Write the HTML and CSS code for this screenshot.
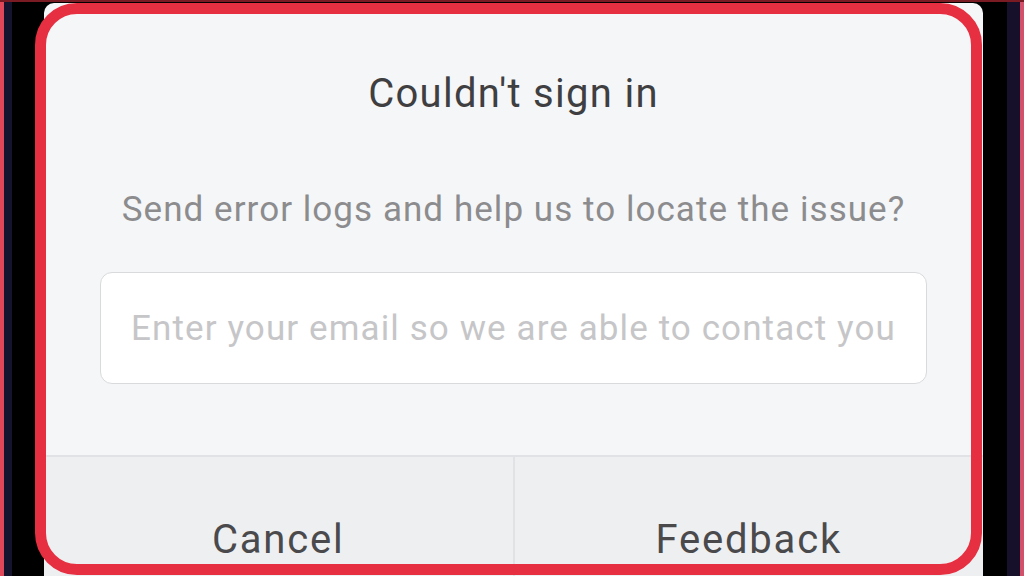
FILE: index.html
```html
<!DOCTYPE html>
<html lang="en">
<head>
    <meta charset="UTF-8">
    <meta name="viewport" content="width=device-width, initial-scale=1.0">
    <title>Couldn't sign in</title>
    <link rel="stylesheet" href="styles.css">
</head>
<body>

    <!-- Phone screen edges -->
    <div class="screen">
        <div class="edge edge-left"></div>

        <!-- Dialog -->
        <div class="dialog">
            <h1 class="dialog-title">Couldn't sign in</h1>
            <p class="dialog-text">Send error logs and help us to locate the issue?</p>
            <div class="email-box">
                <input class="email-input" type="text" placeholder="Enter your email so we are able to contact you">
            </div>
            <div class="dialog-buttons">
                <button class="dialog-btn">Cancel</button>
                <button class="dialog-btn">Feedback</button>
            </div>
        </div>

        <div class="edge edge-right"></div>

        <!-- Red highlight drawn over the dialog -->
        <div class="highlight"></div>
    </div>

</body>
</html>
```

FILE: styles.css
```css
/* Root variables */
:root {
    --frame-red: #e62f40;
    --dialog-bg: #f5f6f8;
    --buttons-bg: #eeeff1;
    --divider: #e1e2e5;
    --title-color: #3f3f41;
    --text-color: #8c8c8e;
    --hint-color: #c6c6c8;
    --font-family: 'Roboto', sans-serif;
}

/* Reset default styles */
* {
    margin: 0;
    padding: 0;
    box-sizing: border-box;
}

body {
    background-color: #000;
    font-family: var(--font-family);
    width: 1024px;
    height: 576px;
    overflow: hidden;
}

/* Whole picture */
.screen {
    position: relative;
    display: flex;
    height: 576px;
    border-top: 2px solid #7a1a22;
}

/* Dark bezel strips on both sides */
.edge {
    width: 44px;
    flex-shrink: 0;
}

.edge-left {
    background: linear-gradient(to right, #e0485a 0 4px, #14142e 4px 12px, #000 12px);
}

.edge-right {
    width: 41px;
    background: linear-gradient(to right, #000 0 24px, #17102a 24px 37px, #d2506a 37px);
}

/* Dialog card */
.dialog {
    flex: 1;
    margin-top: 1px;
    background-color: var(--dialog-bg);
    border-radius: 10px 10px 0 0;
    display: flex;
    flex-direction: column;
    align-items: center;
}

.dialog-title {
    font-size: 40px;
    font-weight: 400;
    line-height: 48px;
    letter-spacing: 1.3px;
    color: var(--title-color);
    margin-top: 67px;
}

.dialog-text {
    font-size: 35px;
    line-height: 40px;
    letter-spacing: 1.05px;
    color: var(--text-color);
    margin-top: 72px;
}

/* Email field */
.email-box {
    width: 827px;
    height: 112px;
    margin-top: 42px;
    background-color: #fff;
    border: 1.5px solid #d9dadc;
    border-radius: 12px;
    display: flex;
    align-items: center;
}

.email-input {
    width: 100%;
    border: none;
    outline: none;
    background: transparent;
    font-family: var(--font-family);
    font-size: 35px;
    letter-spacing: 1.1px;
    text-align: center;
    color: var(--title-color);
}

.email-input::placeholder {
    color: var(--hint-color);
}

/* Bottom buttons */
.dialog-buttons {
    width: 100%;
    margin-top: 71px;
    flex: 1;
    display: flex;
    background-color: var(--buttons-bg);
    border-top: 2px solid var(--divider);
}

.dialog-btn {
    flex: 1;
    border: none;
    background: transparent;
    font-family: var(--font-family);
    font-size: 40px;
    letter-spacing: 1.8px;
    color: #4a4a4c;
    padding-top: 45px;
}

.dialog-btn + .dialog-btn {
    border-left: 2px solid var(--divider);
}

/* Red outline over the dialog */
.highlight {
    position: absolute;
    left: 35px;
    top: 1px;
    width: 947px;
    height: 572px;
    border: 11px solid var(--frame-red);
    border-radius: 42px;
    pointer-events: none;
}
```
